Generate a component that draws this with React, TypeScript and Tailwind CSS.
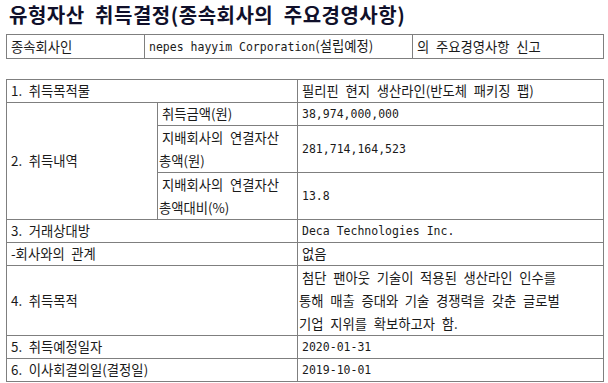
import React from 'react';

// 유형자산 취득결정 공시 (DART 스타일 표)

// 한글 글꼴의 띄어쓰기 폭이 좁아 반각(en) 공백으로 맞춤
const sp = (s: string) => s.replace(/ /g, '\u2002');

const base = 'border border-[#7f7f7f] align-middle pl-[1px] indent-[3px]';
const cell = `${base} leading-[22px]`;
const multi = `${base} leading-[23px]`;
// 영문·숫자 칸은 고정폭 반각 글꼴로
const latin = `${cell} font-['DejaVu_Sans_Mono',monospace] text-[calc(23px/2)]`;

// 줄바꿈된 칸: 첫 줄만 들여쓰기
const lines = (...parts: string[]) =>
  parts.map((p, i) => (
    <span key={p} className={i === 0 ? 'block whitespace-nowrap' : 'block whitespace-nowrap indent-0'}>
      {sp(p)}
    </span>
  ));

export default function App() {
  return (
    <div className="min-h-screen bg-white text-[#1a1a1a] font-['Noto_Sans_CJK_KR',sans-serif] text-[calc(40px/3)]">
      <div className="pl-[9px] leading-[30px] text-[20px] font-bold tracking-[0.5px] text-[#10102a]">
        {sp('유형자산 취득결정(종속회사의 주요경영사항)')}
      </div>

      <table className="ml-[6px] mt-[4px] w-[598px] table-fixed border-collapse">
        <colgroup>
          <col className="w-[138px]" />
          <col className="w-[268px]" />
          <col />
        </colgroup>
        <tbody>
          <tr>
            <td className={cell}>종속회사인</td>
            <td className={cell}>
              <span className="font-['DejaVu_Sans_Mono',monospace] text-[calc(23px/2)]">
                nepes hayyim Corporation
              </span>
              (설립예정)
            </td>
            <td className={cell}>{sp('의 주요경영사항 신고')}</td>
          </tr>
        </tbody>
      </table>

      <table className="ml-[6px] mt-[20px] w-[598px] table-fixed border-collapse">
        <colgroup>
          <col className="w-[151px]" />
          <col className="w-[140px]" />
          <col />
        </colgroup>
        <tbody>
          <tr>
            <td className={cell} colSpan={2}>
              {sp('1. 취득목적물')}
            </td>
            <td className={cell}>{sp('필리핀 현지 생산라인(반도체 패키징 팹)')}</td>
          </tr>
          <tr>
            <td className={cell} rowSpan={3}>
              {sp('2. 취득내역')}
            </td>
            <td className={cell}>취득금액(원)</td>
            <td className={latin}>38,974,000,000</td>
          </tr>
          <tr>
            <td className={multi}>{lines('지배회사의 연결자산', '총액(원)')}</td>
            <td className={latin}>281,714,164,523</td>
          </tr>
          <tr>
            <td className={multi}>{lines('지배회사의 연결자산', '총액대비(%)')}</td>
            <td className={latin}>13.8</td>
          </tr>
          <tr>
            <td className={cell} colSpan={2}>
              {sp('3. 거래상대방')}
            </td>
            <td className={latin}>Deca Technologies Inc.</td>
          </tr>
          <tr>
            <td className={cell} colSpan={2}>
              {sp('-회사와의 관계')}
            </td>
            <td className={cell}>없음</td>
          </tr>
          <tr>
            <td className={cell} colSpan={2}>
              {sp('4. 취득목적')}
            </td>
            <td className={multi}>
              {lines(
                '첨단 팬아웃 기술이 적용된 생산라인 인수를',
                '통해 매출 증대와 기술 경쟁력을 갖춘 글로벌',
                '기업 지위를 확보하고자 함.',
              )}
            </td>
          </tr>
          <tr>
            <td className={cell} colSpan={2}>
              {sp('5. 취득예정일자')}
            </td>
            <td className={latin}>2020-01-31</td>
          </tr>
          <tr>
            <td className={cell} colSpan={2}>
              {sp('6. 이사회결의일(결정일)')}
            </td>
            <td className={latin}>2019-10-01</td>
          </tr>
        </tbody>
      </table>
    </div>
  );
}
